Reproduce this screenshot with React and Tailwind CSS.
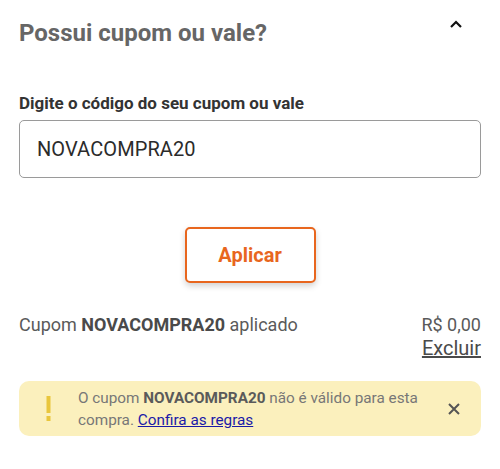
import React from "react";

const App = () => {
  return (
    <div className="w-[500px] h-[469px] bg-white px-[19px] font-['Roboto',sans-serif]">
      <div className="flex items-center justify-between pt-[16px]">
        <h2 className="text-[24px] font-bold text-[#666666] leading-[34px]">Possui cupom ou vale?</h2>
        <svg width="14" height="10" viewBox="0 0 14 10" className="mr-[18px] mb-[18px]">
          <path d="M2 8 L7 3 L12 8" fill="none" stroke="#111" strokeWidth="2.2" />
        </svg>
      </div>

      <label className="block mt-[41px] text-[17px] font-bold text-[#333333] leading-[24px]">
        Digite o código do seu cupom ou vale
      </label>
      <div className="mt-[5px] h-[58px] flex items-center border border-[#9a9a9a] rounded-[5px] px-[17px]">
        <span className="text-[20px] text-[#2b2b2b] tracking-[0.1px]">NOVACOMPRA20</span>
      </div>

      <div className="flex justify-center mt-[49px]">
        <button className="w-[131px] h-[56px] border-2 border-[#e8661e] rounded-[5px] bg-white shadow-[0_3px_6px_rgba(0,0,0,0.18)] text-[20px] font-bold text-[#e8661e]">
          Aplicar
        </button>
      </div>

      <div className="flex justify-between mt-[31px] text-[18px] text-[#5a5a5a] leading-[22px]">
        <p>
          Cupom <span className="font-bold text-[#4a4a4a]">NOVACOMPRA20</span> aplicado
        </p>
        <div className="flex flex-col items-end">
          <span>R$ 0,00</span>
          <a className="text-[20px] underline text-[#4a4a4a] leading-[24px]">Excluir</a>
        </div>
      </div>

      <div className="mt-[21px] flex items-center bg-[#fbf0bd] rounded-[10px] h-[55px] pl-[27px] pr-[20px]">
        <svg width="5" height="26" viewBox="0 0 5 26" className="mr-[27px] shrink-0">
          <rect x="0.5" y="0" width="4" height="17" fill="#e9c63c" />
          <rect x="0.5" y="20" width="4" height="5" fill="#e9c63c" />
        </svg>
        <p className="flex-1 text-[15.3px] text-[#777777] leading-[22px]">
          O cupom <span className="font-bold text-[#5a5a5a]">NOVACOMPRA20</span> não é válido para esta compra.{" "}
          <a className="underline text-[#1a1aa8]">Confira as regras</a>
        </p>
        <svg width="14" height="14" viewBox="0 0 14 14" className="ml-[24px] shrink-0">
          <path d="M2 2 L12 12 M12 2 L2 12" stroke="#555" strokeWidth="2" />
        </svg>
      </div>
    </div>
  );
};

export default App;
